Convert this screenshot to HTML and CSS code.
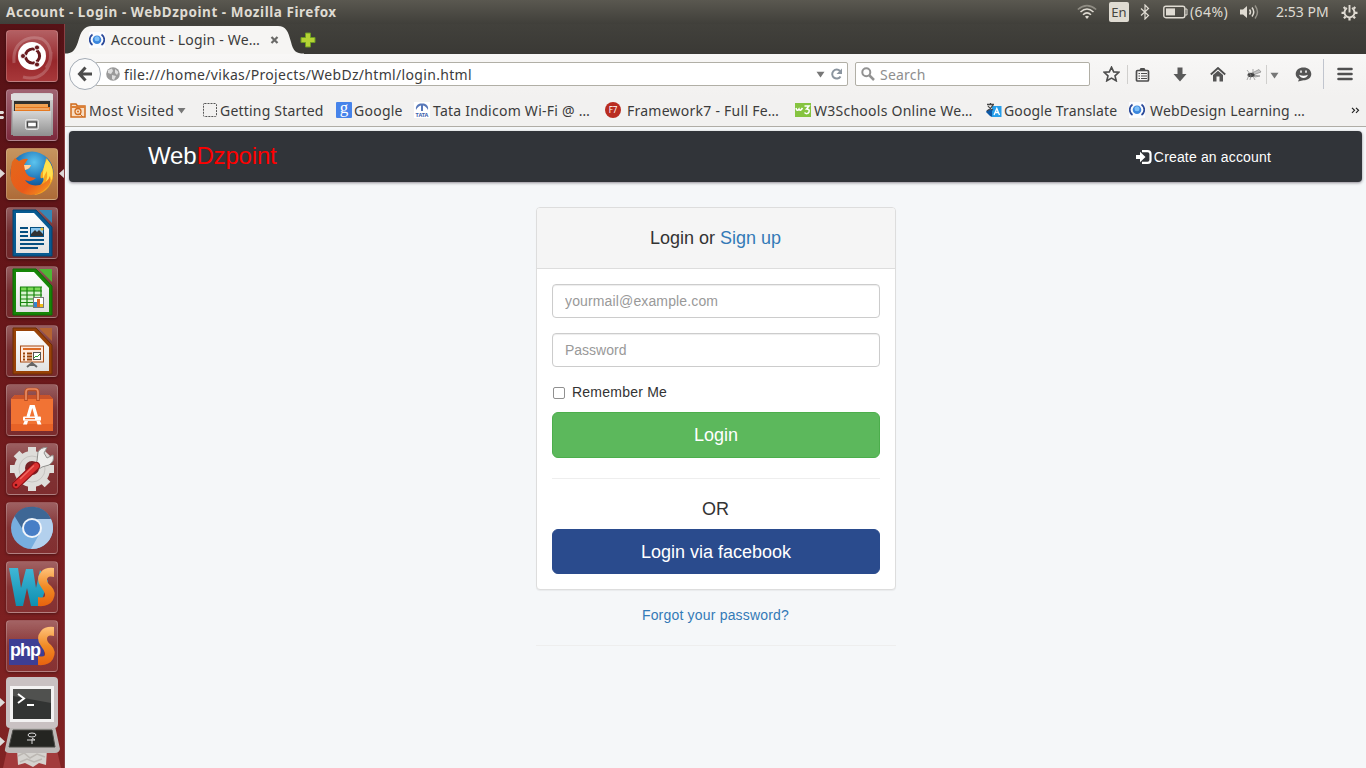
FILE: index.html
```html
<!DOCTYPE html>
<html lang="en">
<head>
<meta charset="utf-8">
<title>Account - Login - WebDzpoint</title>
<link rel="stylesheet" href="styles.css">
</head>
<body>
<svg class="defs" width="0" height="0" aria-hidden="true">
  <defs>
    <linearGradient id="orange" x1="0" y1="0" x2="0" y2="1"><stop offset="0" stop-color="#ffc27a"/><stop offset=".5" stop-color="#f08a25"/><stop offset="1" stop-color="#e8620e"/></linearGradient>
    <linearGradient id="grey" x1="0" y1="0" x2="0" y2="1"><stop offset="0" stop-color="#d6d6d6"/><stop offset="1" stop-color="#8f8f8f"/></linearGradient>
    <linearGradient id="teal" x1="0" y1="0" x2="0" y2="1"><stop offset="0" stop-color="#3fb7d6"/><stop offset="1" stop-color="#0f8fb0"/></linearGradient>
    <linearGradient id="paper" x1="0" y1="0" x2="0" y2="1"><stop offset="0" stop-color="#ffffff"/><stop offset="1" stop-color="#e2e2e2"/></linearGradient>
    <radialGradient id="globe" cx=".55" cy=".25" r=".7"><stop offset="0" stop-color="#5cc4ee"/><stop offset=".6" stop-color="#1a6fb4"/><stop offset="1" stop-color="#123a78"/></radialGradient>
    <linearGradient id="fox" x1="0" y1="0" x2="1" y2="1"><stop offset="0" stop-color="#e2691b"/><stop offset=".6" stop-color="#ea5a1a"/><stop offset="1" stop-color="#f6a021"/></linearGradient>
    <symbol id="web" viewBox="0 0 16 16"><rect width="16" height="16" fill="#fbfcfe"/><path d="M3.500 2.500C-.2 5-.2 10.500 3.500 13M12.500 2.500C16.200 5 16.200 10.500 12.500 13" fill="none" stroke="#2b4a9b" stroke-width="1.700"/><circle cx="8" cy="7.800" r="4.300" fill="#3b86dd"/><circle cx="8" cy="6.800" r="2.500" fill="#7fc0f7"/></symbol>
  </defs>
</svg>

<header class="panel">
  <span class="panel-title">Account - Login - WebDzpoint - Mozilla Firefox</span>
  <div class="indicators">
    <svg class="wifi" width="20" height="16" viewBox="0 0 20 16" fill="none" stroke="#dfdbd2" stroke-width="1.500"><path d="M.8 5.500Q10-2.200 19.200 5.500" stroke="#8f8c83"/><path d="M3.500 8Q10 2 16.500 8M6 10.700Q10 7 14 10.700"/><path d="M8 12.500Q10 11 12 12.500L10 15Z" fill="#dfdbd2" stroke="none"/></svg>
    <span class="lang">En</span>
    <svg class="bt" width="10" height="16" viewBox="0 0 10 16" fill="none" stroke="#dfdbd2" stroke-width="1.200"><path d="M1 4.500L8.500 11.500L5 15V1L8.500 4.500L1 11.500"/></svg>
    <svg class="battery" width="25" height="14" viewBox="0 0 25 14"><rect x=".8" y="1.200" width="21" height="11.500" rx="2" fill="none" stroke="#dfdbd2" stroke-width="1.400"/><rect x="3" y="3.400" width="9" height="7" fill="#dfdbd2"/><path d="M22 4h2v6h-2" fill="none" stroke="#dfdbd2"/></svg>
    <span class="percent">(64%)</span>
    <svg class="volume" width="21" height="16" viewBox="0 0 21 16"><path d="M1 5.500h3L8 2v12L4 10.500H1Z" fill="#dfdbd2"/><path d="M10.500 5.500Q12.500 8 10.500 10.500M13 3.500Q16.500 8 13 12.500" fill="none" stroke="#dfdbd2" stroke-width="1.500"/><path d="M16 1.500Q21 8 16 14.500" fill="none" stroke="#96938a" stroke-width="1.400"/></svg>
    <span class="clock">2:53 PM</span>
    <svg class="gear" width="17" height="17" viewBox="0 0 17 17" fill="none" stroke="#dfdbd2"><path d="M6 4A5 5 0 1 0 11 4" stroke-width="1.900"/><path d="M8.500 1v7.500" stroke-width="1.900"/><path d="M8.500 14v2.500M3 8.800H.5M14 8.800h2.500M4.600 12.600l-1.700 1.700M12.400 12.600l1.700 1.700M4.300 4.600L2.700 3M12.700 4.600l1.600-1.600" stroke-width="2.200"/></svg>
  </div>
</header>

<div class="desktop">
  <aside class="launcher">
    <div class="tile dash"><svg viewBox="0 0 52 52"><path d="M8 33C6 12 22 5 36 9C45 14 48 28 40 38M17 47C32 51 46 42 45 22" fill="none" stroke="#fff" stroke-opacity=".2" stroke-width="3"/><circle cx="26" cy="26" r="14" fill="#fff"/><circle cx="26.500" cy="26" r="7" fill="none" stroke="#681a1e" stroke-width="3.200"/><path d="M26 26L15 26M26 26L32 16M26 26L32 36" stroke="#fff" stroke-width="1.500"/><circle cx="26.500" cy="26" r="5.400" fill="#fff"/><g fill="#681a1e" stroke="#fff" stroke-width=".8"><circle cx="17" cy="26" r="2.500"/><circle cx="31" cy="17.500" r="2.500"/><circle cx="31" cy="34.500" r="2.500"/></g></svg></div>
    <div class="tile files"><svg viewBox="0 0 52 52"><path d="M6 6Q6 4 8 4H44Q47 4 47 6V46H5Z" fill="url(#grey)"/><path d="M5 5H47V11H5Z" fill="#dedede"/><path d="M8 12H44V23H8Z" fill="#30302e"/><path d="M9 15h33v7H9Z" fill="#efa151"/><path d="M10 18h34v4H9Z" fill="#e67921"/><path d="M9 20h34" stroke="#f6d6a8"/><path d="M7 22H45V47H7Z" fill="url(#grey)"/><rect x="19.500" y="30.500" width="13" height="10" rx="2" fill="#b9b9b9" stroke="#e6e6e6"/><rect x="21.500" y="33" width="9" height="5" fill="#fff" stroke="#444" stroke-width="1.300"/></svg></div>
    <div class="tile firefox"><svg viewBox="0 0 52 52"><circle cx="26" cy="25" r="21.500" fill="url(#globe)"/><path d="M40 10Q49 18 47 31Q42 45 29 47L24 40Q37 40 38 29Q33 33 35 25Q39 20 40 10Z" fill="#f7a51f"/><path d="M41 11Q49 20 46 31Q41 42 32 45Q43 35 41 23Q38 27 37 32Q36 20 41 11Z" fill="#ffe14d"/><path d="M6 14L9 10L13 13Q18 10 22 11L18 17H25Q24 21 19 22Q20 29 30 30Q25 35 19 32Q23 39 34 37Q42 34 44 28Q47 36 37 43Q27 50 16 45Q2 38 5 20Z" fill="url(#fox)"/><path d="M18 17H25Q24 21 19 22Z" fill="#ffd4a0"/></svg></div>
    <div class="tile doc"><svg viewBox="0 0 52 52"><path d="M7 3H30L46 20V49H7Z" fill="#075a91" stroke="#044370"/><path d="M33 3H46V16Z" fill="#3587b5"/><path d="M10 6H28L43 22V46H10Z" fill="url(#paper)"/><path d="M14 21h8M14 25h8M14 29h8M14 33h24M14 37h24M14 41h18" stroke="#064f80" stroke-width="2"/><rect x="24.500" y="20.500" width="13" height="9" fill="#8bc6ed" stroke="#064f80"/><path d="M25 29V27l4-4 2 2 2-2 4 4v2Z" fill="#333"/><circle cx="36" cy="22" r="1.500" fill="#f1c233"/></svg></div>
    <div class="tile doc"><svg viewBox="0 0 52 52"><path d="M7 3H30L46 20V49H7Z" fill="#168607" stroke="#0d6b05"/><path d="M33 3H46V16Z" fill="#4eb735"/><path d="M10 6H28L43 22V46H10Z" fill="url(#paper)"/><path d="M14 21H35V40H14Z" fill="#d9f4cf"/><path d="M14 21h21v4H14Z" fill="#7bd957"/><path d="M14.500 21V40M21 21V40M28 21V40M35 21V40M14 21H36M14 25H36M14 29H36M14 33H36M14 36.500H36M14 40H36" stroke="#17840b" stroke-width="1.200"/><rect x="27.500" y="31.500" width="10" height="10" fill="#fff" stroke="#777"/><path d="M28 36h3v5h-3Z" fill="#3486d0"/><path d="M31 33h3v8h-3Z" fill="#dc6823"/><path d="M34 38h3v3h-3Z" fill="#eebd18"/></svg></div>
    <div class="tile doc"><svg viewBox="0 0 52 52"><path d="M7 3H30L46 20V49H7Z" fill="#984207" stroke="#6d2c04"/><path d="M33 3H46V16Z" fill="#b56432"/><path d="M10 6H28L43 22V46H10Z" fill="url(#paper)"/><rect x="14.500" y="21" width="23" height="16" fill="#ffe9dc" stroke="#a64911"/><path d="M17 24h18" stroke="#dc6b24" stroke-width="2"/><path d="M17 28.500h2M17 31.500h2M17 34.500h2M21 28.500h5M21 31.500h5M21 34.500h5" stroke="#984207" stroke-width="2"/><rect x="27.500" y="27.500" width="7" height="7" fill="#fff" stroke="#555"/><path d="M28 33l2-2 1 1 3-3" fill="none" stroke="#2a9b2a"/><path d="M26 37V41M26 38L21 42M26 38L31 42" stroke="#666" stroke-width="2"/></svg></div>
    <div class="tile store"><svg viewBox="0 0 52 52"><path d="M5 15L9 11H43L47 15V47H5Z" fill="#f17334"/><path d="M5 15L9 11H43L47 15Z" fill="#c9532a"/><path d="M5 40H47V47H5Z" fill="#e76227"/><path d="M20 17V8Q20 5.500 23 5.500H29Q32 5.500 32 8V17" fill="none" stroke="#b84d23" stroke-width="3.500"/><path d="M20 16V8Q20 5 23 5H29Q32 5 32 8V16" fill="none" stroke="#e98b62" stroke-width="1.700"/><path d="M22 33L25 22.500H27.500L30.500 33" fill="none" stroke="#fff" stroke-width="3.200"/><path d="M18.500 37H22L21 40.500H17ZM30.500 37H34L35.500 40.500H31.500Z" fill="#fff"/><rect x="17" y="32.500" width="18" height="4.200" rx="1" fill="#fff"/><path d="M19 34.600h10" stroke="#f17334" stroke-width="1.300"/></svg></div>
    <div class="tile settings"><svg viewBox="0 0 52 52"><circle cx="26" cy="26" r="18" fill="#deddda"/><path d="M26 4V48M4 26H48M10.500 10.500L41.500 41.500M10.500 41.500L41.500 10.500" stroke="#deddda" stroke-width="8"/><circle cx="26" cy="26" r="13" fill="none" stroke="#c7c5c2"/><circle cx="26" cy="25" r="7" fill="#762226"/><path d="M31 18L32 9Q35 4 41 4.500L38 10L41 15L47 12Q49 18 43 22L36 24L33 26L29 22Z" fill="#eeeeec" stroke="#91918e"/><path d="M10 42L30 23" stroke="#8f1116" stroke-width="8.500" stroke-linecap="round"/><path d="M10 42L30 23" stroke="#d93030" stroke-width="6" stroke-linecap="round"/><path d="M14 36L28 22.500" stroke="#ef6a63" stroke-width="1.500"/><circle cx="10" cy="42" r="1.300" fill="#621012"/></svg></div>
    <div class="tile chromium"><svg viewBox="0 0 52 52"><circle cx="26" cy="26" r="21" fill="#77aedf"/><path d="M8.500 14A21 21 0 0 1 45 17H26L17 28Z" fill="#3e6795"/><path d="M45 17A21 21 0 0 1 25 47L35 29L31 17Z" fill="#b3d0ed"/><circle cx="26" cy="26" r="10" fill="#f1f5fa"/><circle cx="26" cy="26" r="8" fill="#477ec6"/></svg></div>
    <div class="tile storm"><svg viewBox="0 0 52 52"><path d="M3 7H12L15 27L20 8H27L30 27L34 9L42 20L34 45H25L21 27L17 45H10Z" fill="url(#teal)"/><path d="M48 7V16Q41 14 41 19Q41 22 45 25Q51 31 47 39Q43 46 32 45V36Q40 38 39 33Q38 30 35 26Q29 18 35 11Q39 6 48 7Z" fill="url(#orange)"/></svg></div>
    <div class="tile storm"><svg viewBox="0 0 52 52"><rect x="3" y="19" width="35" height="26" fill="#3d3e94"/><path d="M48 7V16Q41 14 41 19Q41 22 45 25Q51 31 47 39Q43 46 32 45V36Q40 38 39 33Q38 30 35 26Q29 18 35 11Q39 6 48 7Z" fill="url(#orange)"/></svg><span class="php">php</span></div>
    <div class="stack"><svg width="65" height="92" viewBox="0 0 65 92"><path d="M7 73H57L61 91H3Z" fill="#a33b3c"/><path d="M17 72H47L46 88L39 86L33 90L25 86L18 88Z" fill="#d5d3cf"/><path d="M18 79l6-3 6 5 7-4 8 3M20 85l7-3 7 3 8-3" fill="none" stroke="#bcb8b3" stroke-width="1.500"/><path d="M10 49H55L60 72Q59 76 55 76H9Q4 75 5 72Z" fill="#bdb9b7"/><path d="M13 53H52L55 70H9Z" fill="#242521" stroke="#4b4b47"/><ellipse cx="32" cy="58" rx="4" ry="2" fill="none" stroke="#ddd"/><path d="M27 63h8l-3-2M32 62v5" stroke="#ddd" fill="none"/><rect x="6" y="0" width="52" height="51" rx="4" fill="#c9c1c2"/><path d="M10 9H54V45H10Z" fill="#f3f2f2"/><path d="M13 12H51V42H13Z" fill="#323433"/><path d="M13 12H51V26L13 19Z" fill="#50514f"/><path d="M18 17l6 4.500-6 4.500M27 28h7" fill="none" stroke="#fff" stroke-width="2"/><path d="M0 21L5 25.500L0 30ZM0 60L5 64.500L0 69Z" fill="#dddbd8"/></svg></div>
    <svg class="marks" width="65" height="160" viewBox="0 0 65 160"><path d="M0 15h3q2 1.500 0 3H0ZM0 20h3q2 1.500 0 3H0Z" fill="#e2dedb"/><path d="M0 73L5 77.500L0 82ZM64 73L59 77.500L64 82Z" fill="#ddd8d7"/></svg>
  </aside>

  <main class="browser">
    <div class="tabs">
      <svg class="tab-shape" width="250" height="30" viewBox="0 0 250 30"><path d="M0 30V29.500C7 29.500 10 27 13 18C16 7 19 2 27 2H213C221 2 223 7 226 18C228 27 231 29.500 239 29.500V30Z" fill="#f6f5f3"/></svg>
      <svg class="fav" width="16" height="16"><use href="#web"/></svg>
      <span class="tab-label">Account - Login - We…</span>
      <svg class="close" width="8" height="8" viewBox="0 0 8 8"><path d="M1 1L7 7M7 1L1 7" stroke="#6a6a68" stroke-width="2.200"/></svg>
      <svg class="plus" width="16" height="16" viewBox="0 0 16 16"><path d="M5.500 1H10.500V5.500H15V10.500H10.500V15H5.500V10.500H1V5.500H5.500Z" fill="#b5d334" stroke="#6d9b23"/></svg>
    </div>
    <div class="nav">
      <div class="back"><svg width="16" height="16" viewBox="0 0 16 16" fill="none" stroke="#4b4b4b" stroke-width="3"><path d="M8.500 1.500L2.500 8L8.500 14.500M3 8H15"/></svg></div>
      <div class="url">
        <svg width="14" height="14" viewBox="0 0 14 14"><circle cx="7" cy="7" r="6.800" fill="#9a9a9a"/><path d="M2 3L6 1.500L7 4L5 7L2 6ZM9 2l3.500 3-1.500 3-2-2ZM6 8l4 1-2 4-2-1Z" fill="#dedede"/></svg>
        <span class="url-text">file:///home/vikas/Projects/WebDz/html/login.html</span>
        <svg class="drop" width="9" height="7" viewBox="0 0 9 7"><path d="M.5 .8H8.500L4.500 6.500Z" fill="#777"/></svg>
        <svg class="reload" width="13" height="13" viewBox="0 0 13 13"><path d="M10 3A4.500 4.500 0 1 0 10.500 8.500" fill="none" stroke="#8b959f" stroke-width="2"/><path d="M12 .5V6H6.500Z" fill="#8b959f"/></svg>
      </div>
      <div class="search">
        <svg width="14" height="14" viewBox="0 0 14 14" fill="none" stroke="#929292" stroke-width="2"><circle cx="5.300" cy="5.300" r="4"/><path d="M8.500 8.500L13 13" stroke-width="2.500"/></svg>
        <span>Search</span>
      </div>
      <div class="tools">
        <svg width="17" height="16" viewBox="0 0 17 16"><path d="M8.500 1.200L10.700 5.900L15.800 6.300L12 9.800L13.200 14.800L8.500 12.100L3.800 14.800L5 9.800L1.200 6.300L6.300 5.900Z" fill="none" stroke="#4d4d4d" stroke-width="1.600"/></svg>
        <i class="sep"></i>
        <svg class="clip" width="15" height="15" viewBox="0 0 15 15"><rect x="1.500" y="3.500" width="12" height="10.500" rx="1" fill="#f6f5f4" stroke="#4d4d4d" stroke-width="1.700"/><path d="M4 4L5.500 1H9.500L11 4Z" fill="#4d4d4d"/><path d="M3.500 6.500h1.500M6 6.500h6M3.500 9h1.500M6 9h6M3.500 11.500h1.500M6 11.500h6" stroke="#4d4d4d" stroke-width="1.200"/></svg>
        <svg class="down" width="14" height="15" viewBox="0 0 14 15"><path d="M4.500 .5H9.500V7H13.500L7 14.500L.5 7H4.500Z" fill="#5a5a5a"/></svg>
        <svg class="home" width="16" height="15" viewBox="0 0 16 15"><path d="M.8 7.500L8 1L15.200 7.500" fill="none" stroke="#4d4d4d" stroke-width="1.800"/><path d="M3 8L8 3.700L13 8V14.500H9.500V9.500H6.500V14.500H3Z" fill="#555"/></svg>
        <svg class="bug" width="16" height="13" viewBox="0 0 16 13"><path d="M6 5L13 1.500L15 4L7 7ZM7 7L14 8L9 9Z" fill="#c5c5c5" stroke="#888" stroke-width=".7"/><ellipse cx="5" cy="7" rx="3.500" ry="2.200" fill="#444"/><path d="M5 7L1 2M7 6L7 1M3 7L1 12M7 8L9 12M5 7L4 12" stroke="#888" stroke-width=".7"/></svg>
        <i class="sep short"></i>
        <svg class="drop2" width="9" height="7" viewBox="0 0 9 7"><path d="M.5 .8H8.500L4.500 6.500Z" fill="#777"/></svg>
        <svg class="smile" width="17" height="15" viewBox="0 0 17 15"><path d="M8.500 .5C13 .5 16.300 3.200 16.300 7S13 13.300 8.500 13.300L3 14.500L4 12C1.800 10.800.7 9 .7 7C.7 3.200 4 .5 8.500 .5Z" fill="#555"/><path d="M6 3.500v2.300M11 3.500v2.300" stroke="#fff" stroke-width="1.500"/><path d="M4 7.800Q8.500 9.500 13 7.800Q11.500 11 8.500 11T4 7.800Z" fill="#fff"/></svg>
        <i class="sep tall"></i>
        <svg class="menu" width="16" height="14" viewBox="0 0 16 14"><path d="M1.500 2H14.500M1.500 7H14.500M1.500 12H14.500" stroke="#505050" stroke-width="2.600" stroke-linecap="round"/></svg>
      </div>
    </div>
    <div class="bookmarks">
      <div class="bm b1"><svg width="16" height="16" viewBox="0 0 16 16"><path d="M1 15V2H6L7.500 4H15V15Z" fill="#f7dcc3" stroke="#cf6b1d" stroke-width="1.500"/><path d="M1 4H15V6H1Z" fill="#dc7f35"/><circle cx="8" cy="9.500" r="3" fill="none" stroke="#cf6b1d" stroke-width="1.300"/><circle cx="8" cy="9.500" r="1" fill="#cf6b1d"/><path d="M10 12l3 3" stroke="#cf6b1d"/></svg><span>Most Visited</span><svg class="drop3" width="9" height="7" viewBox="0 0 9 7"><path d="M.5 1H8.500L4.500 6.500Z" fill="#777"/></svg></div>
      <div class="bm b2"><svg width="14" height="14" viewBox="0 0 14 14"><rect x=".5" y=".5" width="13" height="13" rx="1" fill="none" stroke="#555" stroke-dasharray="2 1"/></svg><span>Getting Started</span></div>
      <div class="bm b3"><b class="g">g</b><span>Google</span></div>
      <div class="bm b4"><div class="tata"><svg width="16" height="10" viewBox="0 0 16 10"><path d="M2 8Q1 3 6 1.500H10Q15 3 14 8Q12 4 9 3.500V9H7V3.500Q4 4 2 8Z" fill="#5878b9"/></svg><b>TATA</b></div><span>Tata Indicom Wi-Fi @ …</span></div>
      <div class="bm b5"><b class="f7">F7</b><span>Framework7 - Full Fe…</span></div>
      <div class="bm b6"><svg width="16" height="14" viewBox="0 0 16 14"><rect width="16" height="14" fill="#86c440"/><path d="M1 5Q2 9 4 6Q5 9 7.500 5M9.500 3H14L11.500 6Q15 6 14 9Q12 12 9.500 9.500" fill="none" stroke="#fff" stroke-width="1.500"/></svg><span>W3Schools Online We…</span></div>
      <div class="bm b7"><svg width="16" height="16" viewBox="0 0 16 16"><path d="M1 8L6 7V15L4 14L0 10Z" fill="#0d58a6"/><rect x="6" y="4" width="9.500" height="11" fill="#269eea"/><path d="M8 13L10.800 6.500L13.500 13M9 10.500H12.500" stroke="#fff" fill="none" stroke-width="1.300"/><path d="M1 2.500H8M4.500 1V3M7 3Q5 7 1 9M2 4Q4 7 7 8" stroke="#454545" stroke-width="1.300" fill="none"/></svg><span>Google Translate</span></div>
      <div class="bm b8"><svg width="16" height="16"><use href="#web"/></svg><span>WebDesign Learning …</span></div>
      <svg width="9" height="7" viewBox="0 0 9 7"><path d="M1 .8L3.500 3.300L1 5.800M5 .8L7.500 3.300L5 5.800" fill="none" stroke="#222" stroke-width="1.200"/></svg>
    </div>
    <div class="page">
      <nav class="navbar">
        <a class="brand">Web<span>Dzpoint</span></a>
        <a class="create"><svg width="16" height="14" viewBox="0 0 16 14"><path d="M0 5H4V1.800L9.500 7L4 12.200V9H0Z" fill="#fff"/><path d="M6 1.200H11.500Q14.500 1.200 14.500 4V10Q14.500 12.800 11.500 12.800H6" fill="none" stroke="#fff" stroke-width="2.200"/></svg>Create an account</a>
      </nav>
      <section class="login">
        <div class="card">
          <h3>Login or <a>Sign up</a></h3>
          <form class="form">
            <input class="email" type="text" placeholder="yourmail@example.com">
            <input type="password" placeholder="Password">
            <label><i class="check"></i>Remember Me</label>
            <button type="button" class="btn green">Login</button>
            <hr>
            <p>OR</p>
            <button type="button" class="btn blue">Login via facebook</button>
          </form>
        </div>
        <a class="forgot">Forgot your password?</a>
        <hr>
      </section>
    </div>
  </main>
</div>
</body>
</html>
```
FILE: styles.css
```css
* { box-sizing: border-box; }
body { margin: 0; width: 1366px; height: 768px; overflow: hidden; display: flex; flex-direction: column; font-family: "Noto Sans", "Open Sans", sans-serif; font-size: 14px; color: #3c3c3c; }
svg { display: block; flex: none; }
.defs { position: absolute; }
span { white-space: nowrap; }

.panel { height: 24px; flex: none; display: flex; align-items: center; padding-left: 6px; background: linear-gradient(#5a5850, #403f3a); color: #dfdbd2; }
.panel-title { width: 1071px; flex: none; font-weight: bold; font-size: 13.5px; letter-spacing: .54px; }
.indicators { display: flex; align-items: center; flex: none; }
.lang { width: 20px; height: 20px; margin-left: 12px; border-radius: 2px; background: #dfdbd2; color: #45443f; font-size: 13px; line-height: 20px; text-align: center; }
.bt { margin-left: 11px; }
.battery { margin-left: 13px; }
.percent { width: 51px; padding-left: 2px; margin-top: -2px; letter-spacing: .4px; }
.volume { width: 21px; }
.clock { width: 81px; padding-left: 16px; margin-top: -2px; }

.desktop { flex: 1; display: flex; min-height: 0; }
.launcher { position: relative; width: 65px; flex: none; display: flex; flex-direction: column; gap: 7px; padding: 6px 0 0 6px; background: linear-gradient(#561216, #661619 35%, #7c2021 80%, #802323); border-right: 1px solid #8a4044; }
.tile { position: relative; width: 52px; height: 52px; flex: none; border: 1px solid rgba(255, 255, 255, .2); border-radius: 4px; background: linear-gradient(rgba(255, 255, 255, .3), rgba(255, 255, 255, .1) 50%, rgba(255, 255, 255, .08)); box-shadow: 0 1px 3px rgba(0, 0, 0, .35); }
.tile svg { width: 52px; height: 52px; margin: -1px; }
.dash { background: linear-gradient(#b36063, #97272b 60%, #a8383a); }
.files { background: linear-gradient(#a06472, #7c293c); }
.firefox { background: linear-gradient(#c6955f, #ae6b38); }
.php { position: absolute; left: 3px; top: 17px; font: bold 18px/24px "Liberation Sans", Arial, sans-serif; letter-spacing: -1px; color: #fff; }
.stack { height: 92px; margin: -2px 0 0 -6px; flex: none; }
.marks { position: absolute; left: 0; top: 72px; }

.browser { flex: 1; min-width: 0; display: flex; flex-direction: column; background: #f2f1f0; }
.tabs { position: relative; height: 30px; flex: none; display: flex; align-items: center; padding-left: 24px; background: linear-gradient(#42413c, #3a3935); }
.tabs > * { position: relative; }
.tabs .tab-shape { position: absolute; left: 0; top: 0; }
.tab-label { width: 166px; padding: 0 0 0 6px; letter-spacing: .18px; }
.tabs .fav { top: 1px; }
.close { top: 1px; width: 9px; margin-left: -1px; }
.plus { margin-left: 21px; top: 1px; }
.nav { height: 42px; flex: none; display: flex; align-items: center; padding: 0 0 2px 4px; background: linear-gradient(#f8f7f6, #f2f1f0); }
.back { width: 32px; height: 32px; z-index: 1; flex: none; display: flex; align-items: center; justify-content: center; border: 1px solid #a3abb5; border-radius: 50%; background: #fbfbfb; }
.url { width: 753px; height: 24px; margin-left: -6px; display: flex; align-items: center; padding-left: 10px; border: 1px solid #b1afa6; border-radius: 2px; background: #fff; }
.url-text { width: 696px; padding-left: 4px; letter-spacing: .32px; }
.reload { margin-left: 5px; }
.search { width: 235px; height: 24px; margin-left: 7px; display: flex; align-items: center; gap: 5px; padding-left: 5px; border: 1px solid #b1afa6; border-radius: 2px; background: #fff; color: #8e8e8e; letter-spacing: .2px; }
.tools { display: flex; align-items: center; height: 36px; padding-left: 13px; }
.sep { width: 1px; height: 19px; margin: 0 7px; background: #d0cfcd; }
.down { margin-left: 23px; }
.home { margin-left: 23px; }
.bug { margin-left: 20px; }
.short { margin: 0 3px 0 4px; }
.drop2 { margin-top: 3px; }
.smile { margin-left: 16px; }
.tall { height: 30px; margin: 0 13px 0 11px; background: #c1c5ce; }
.bookmarks { height: 31px; flex: none; display: flex; align-items: center; padding: 0 0 2px 5px; border-bottom: 1px solid #b0ada6; }
.bm { display: flex; align-items: center; gap: 3px; flex: none; letter-spacing: .25px; }
.b1, .b2 { width: 133px; }
.b1 { letter-spacing: .4px; }
.b2 { letter-spacing: .2px; }
.b3 { width: 78px; gap: 2px; }
.b4 { width: 191px; }
.b5 { width: 190px; gap: 6px; }
.b6 { width: 191px; }
.b7 { width: 143px; gap: 2px; letter-spacing: .13px; }
.b8 { width: 222px; gap: 5px; letter-spacing: .16px; }
.g { width: 16px; height: 16px; border-radius: 1px; background: #4683ea; color: #fff; font: 17px/12px "Liberation Serif", serif; text-align: center; }
.tata { width: 16px; height: 16px; background: #fff; }
.tata svg { height: 10px; }
.tata b { display: block; font-size: 5.5px; line-height: 6px; color: #3f62ad; text-align: center; letter-spacing: 0; }
.f7 { width: 16px; height: 16px; border-radius: 50%; background: #b92c20; color: #fff; font-size: 8px; font-weight: normal; line-height: 16px; text-align: center; letter-spacing: 0; }

.page { flex: 1; min-height: 0; padding: 4px; background: #f5f7f9; font-family: "Liberation Sans", Arial, sans-serif; color: #333; }
.navbar { height: 51px; display: flex; align-items: center; justify-content: space-between; padding: 0 91px 0 79px; border-radius: 4px; background: #313439; box-shadow: 0 1px 3px #8e8a94; color: #fff; }
.brand { font-size: 24px; line-height: 48px; margin-top: -2px; letter-spacing: -.17px; }
.brand span { color: #f00; }
.create { display: flex; align-items: center; gap: 2px; letter-spacing: .16px; }
.login { width: 360px; margin: 25px 0 0 467px; text-align: center; }
.login a { color: #337ab7; }
.card { border: 1px solid #ddd; border-radius: 4px; background: #fff; box-shadow: 0 1px 1px rgba(0, 0, 0, .05); }
h3 { margin: 0; height: 61px; padding-right: 1px; line-height: 60px; font-size: 18px; font-weight: normal; border-bottom: 1px solid #ddd; background: #f5f5f5; border-radius: 3px 3px 0 0; }
.form { padding: 15px; display: flex; flex-direction: column; }
input { height: 34px; margin: 0 0 15px; padding: 6px 12px; border: 1px solid #ccc; border-radius: 4px; box-shadow: inset 0 1px 1px rgba(0, 0, 0, .075); font: 14px "Liberation Sans", Arial, sans-serif; }
.email { letter-spacing: .14px; }
input::placeholder { color: #999; }
label { height: 20px; margin: 0 0 10px 1px; display: flex; align-items: center; gap: 7px; letter-spacing: .23px; }
.check { width: 12px; height: 12px; margin-top: 2px; border: 1px solid #909090; border-radius: 2px; background: #fff; }
.btn { height: 46px; padding: 0; border: 1px solid #4cae4c; border-radius: 6px; background: #5cb85c; color: #fff; font: 18px "Liberation Sans", Arial, sans-serif; }
.blue { height: 45px; padding-top: 1px; border-color: #2a4b8d; background: #2a4b8d; }
hr { width: 100%; height: 1px; margin: 20px 0; border: 0; background: #eee; }
.form p { margin: 0 0 10px; padding-right: 1px; font-size: 18px; line-height: 20px; }
.forgot { display: block; margin-top: 15px; padding-right: 1px; line-height: 20px; letter-spacing: .19px; }
```
